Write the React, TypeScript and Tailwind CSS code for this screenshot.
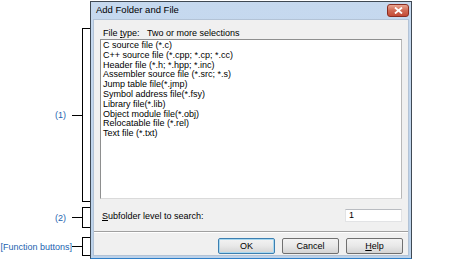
import React from "react";

const fileTypes = [
  "C source file (*.c)",
  "C++ source file (*.cpp; *.cp; *.cc)",
  "Header file (*.h; *.hpp; *.inc)",
  "Assembler source file (*.src; *.s)",
  "Jump table file(*.jmp)",
  "Symbol address file(*.fsy)",
  "Library file(*.lib)",
  "Object module file(*.obj)",
  "Relocatable file (*.rel)",
  "Text file (*.txt)",
];

function Callout({
  label,
  height,
  gap,
  className = "",
}: {
  label: string;
  height: string;
  gap: string;
  className?: string;
}) {
  return (
    <div className={`flex items-center justify-end ${height} ${className}`}>
      <span className={`text-[9px] leading-[10px] text-[#2363b0] whitespace-nowrap ${gap}`}>{label}</span>
      <div className="w-[10px] h-px bg-black" />
      <div className="w-[8px] self-stretch border-l border-y border-black" />
    </div>
  );
}

function DlgButton({ children, primary = false }: { children: React.ReactNode; primary?: boolean }) {
  return (
    <button
      className={`w-[57px] h-[16px] rounded-[2px] border text-[9px] leading-[14px] text-black bg-gradient-to-b from-[#f3f3f3] via-[#e8e8e8] to-[#d4d4d4] ${
        primary ? "border-[#3c7fb1] shadow-[inset_0_0_0_1px_#a8d8f0]" : "border-[#707070]"
      }`}
    >
      {children}
    </button>
  );
}

export default function App() {
  return (
    <div
      className="w-[474px] h-[261px] bg-white flex overflow-hidden"
      style={{ fontFamily: '"Liberation Sans", Arial, sans-serif' }}
    >
      {/* callouts */}
      <div className="w-[90px] pt-[28px] flex flex-col">
        <Callout label="(1)" height="h-[174px]" gap="mr-[6px]" />
        <Callout label="(2)" height="h-[21px]" gap="mr-[6px]" className="mt-[5px]" />
        <Callout label="[Function buttons]" height="h-[19px]" gap="" className="mt-[9px]" />
      </div>

      {/* dialog window */}
      <div className="mt-[1px] w-[322px] h-[258px] border border-[#3f4954] border-b-[#2f7fc8] bg-gradient-to-b from-[#c6d9ef] to-[#bcd2ea] flex flex-col">
        <div className="h-[17px] flex items-center justify-between pl-[5px] pr-[2px]">
          <span className="text-[9.5px] text-black">Add Folder and File</span>
          <div className="w-[22px] h-[13px] rounded-[3px] border border-[#8a2d22] bg-gradient-to-b from-[#e9a592] via-[#d06a55] to-[#c44a36] flex items-center justify-center">
            <svg width="9" height="7" viewBox="0 0 9 7">
              <path d="M1 0.5 L8 6.5 M8 0.5 L1 6.5" stroke="#fff" strokeWidth="1.8" />
            </svg>
          </div>
        </div>

        <div className="flex-1 mx-[2px] mb-[2px] bg-[#f0f0f0] border border-[#b3c3d6] flex flex-col text-[9px] text-black">
          <div className="pt-[8px] pl-[9px] leading-[10px] whitespace-nowrap">
            File <span className="underline">t</span>ype:&nbsp;&nbsp;&nbsp;Two or more selections
          </div>

          <div className="mt-[1px] mx-[6px] h-[160px] bg-white border border-[#8e8f8f] border-r-[#b8b8b8] border-b-[#dadada] pt-[1px] pl-[2px]">
            {fileTypes.map((t) => (
              <div key={t} className="h-[9.8px] leading-[9.8px] whitespace-nowrap">
                {t}
              </div>
            ))}
          </div>

          <div className="mt-[10px] mx-[6px] h-[13px] flex items-center justify-between">
            <span className="pl-[2px] leading-[10px]">
              <span className="underline">S</span>ubfolder level to search:
            </span>
            <div className="w-[57px] h-[13px] bg-white border border-[#e2e3e5] border-t-[#b9bcc1] pl-[3px] leading-[11px]">
              1
            </div>
          </div>

          <div className="mt-[9px] border-t border-[#a0a0a0] border-b border-b-white" />

          <div className="mt-[5px] pr-[5px] flex justify-end gap-[7px]">
            <DlgButton primary>OK</DlgButton>
            <DlgButton>Cancel</DlgButton>
            <DlgButton>
              <span className="underline">H</span>elp
            </DlgButton>
          </div>
        </div>
      </div>
    </div>
  );
}
